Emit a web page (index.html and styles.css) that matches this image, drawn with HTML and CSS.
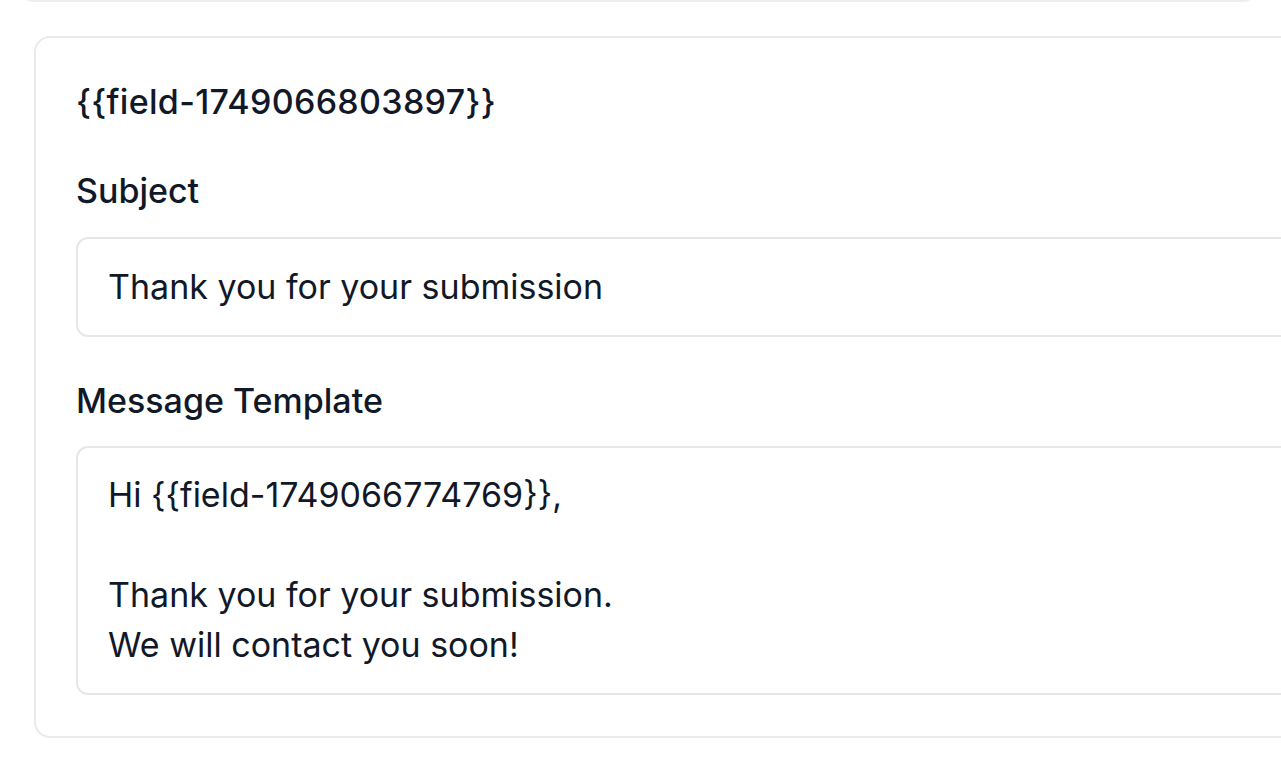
FILE: index.html
```html
<!DOCTYPE html>
<html lang="en">
<head>
<meta charset="utf-8">
<title>Email notification</title>
<link rel="stylesheet" href="styles.css">
</head>
<body>
<div class="page">
  <div class="prev-card"></div>
  <section class="card">
    <div class="card-title">{{field-1749066803897}}</div>
    <div class="field">
      <label class="label">Subject</label>
      <div class="input">Thank you for your submission</div>
    </div>
    <div class="field field-message">
      <label class="label">Message Template</label>
      <div class="textarea">Hi {{field-1749066774769}},<br><br>Thank you for your submission.<br>We will contact you soon!</div>
    </div>
  </section>
</div>
</body>
</html>
```
FILE: styles.css
```css
html, body {
  margin: 0;
  padding: 0;
  background: #ffffff;
  overflow: hidden;
}
body {
  width: 1281px;
  height: 774px;
  font-family: Inter, "Noto Sans", sans-serif;
  color: #111827;
}
.page {
  display: flex;
  flex-direction: column;
}
.prev-card {
  margin: -31px 22px 0 18px;
  height: 29px;
  border: 2px solid #eceef1;
  border-radius: 16px;
}
.card {
  margin: 34px 0 0 34px;
  width: 1340px;
  border: 2px solid #e8eaed;
  border-radius: 16px;
  padding: 43px 0 41px 40px;
  box-sizing: border-box;
}
.card-title {
  font-size: 34px;
  font-weight: 500;
  line-height: 42px;
  letter-spacing: 0.3px;
}
.field {
  margin-top: 47px;
  display: flex;
  flex-direction: column;
}
.field-message {
  margin-top: 43px;
}
.label {
  font-size: 34px;
  font-weight: 500;
  line-height: 42px;
  margin-bottom: 25px;
}
.field-message .label {
  margin-bottom: 24px;
}
.input, .textarea {
  border: 2px solid #e5e7eb;
  border-radius: 12px;
  padding: 23px 30px;
  font-size: 34px;
  line-height: 50px;
  font-weight: 400;
}
.textarea {
  padding: 22px 30px 23px;
}
```
